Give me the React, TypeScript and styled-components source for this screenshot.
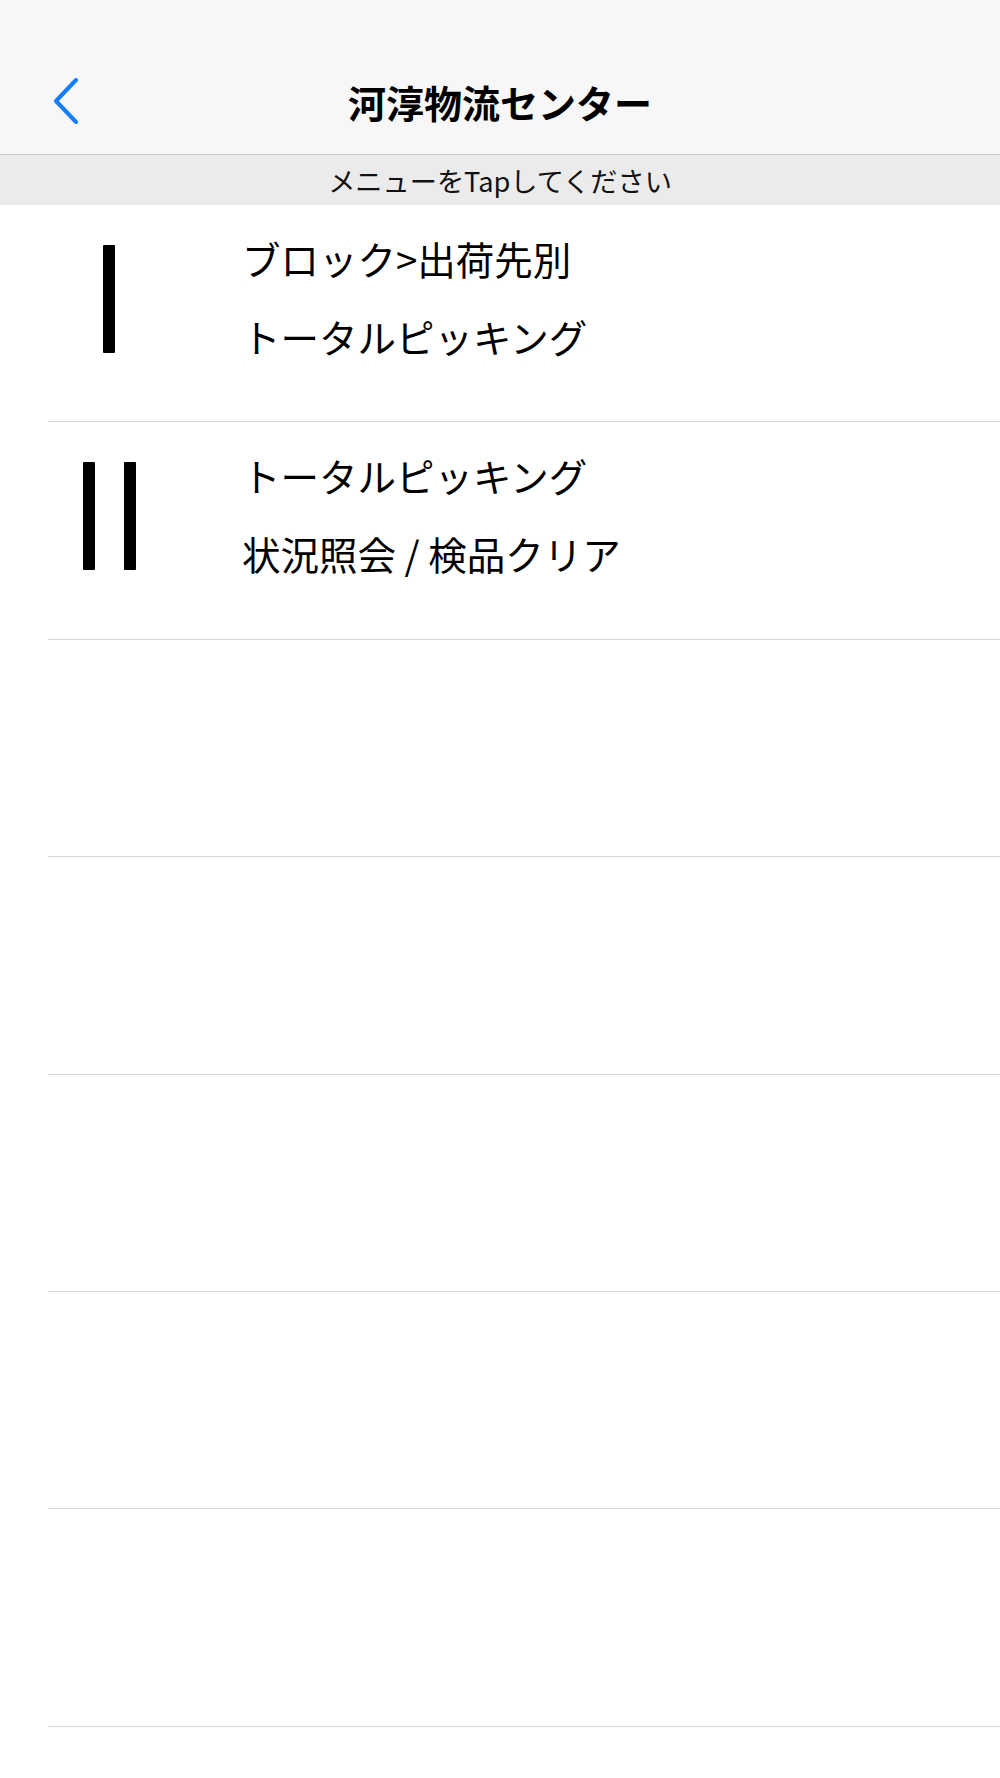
import * as React from "react";
import styled, { createGlobalStyle } from "styled-components";

const GlobalStyle = createGlobalStyle`
  html, body {
    margin: 0;
    padding: 0;
    background: #ffffff;
  }
  body {
    font-family: "Noto Sans CJK JP", "Noto Sans", sans-serif;
    color: #000;
  }
`;

const Page = styled.div`
  width: 1000px;
  min-height: 1778px;
  background: #fff;
  overflow: hidden;
`;

const NavBar = styled.header`
  box-sizing: border-box;
  height: 155px;
  padding-top: 48px;
  background: #f7f7f7;
  border-bottom: 1px solid #c6c6c6;
`;

const NavInner = styled.div`
  position: relative;
  height: 106px;
  display: flex;
  align-items: center;
  justify-content: center;
`;

const BackButton = styled.button`
  position: absolute;
  left: 53px;
  top: 50%;
  transform: translateY(-50%);
  width: 26px;
  height: 46px;
  padding: 0;
  border: 0;
  background: transparent;
  cursor: pointer;
  display: flex;
`;

const Title = styled.h1`
  margin: 0;
  font-size: 38px;
  font-weight: 700;
  letter-spacing: 0;
`;

const Prompt = styled.div`
  height: 50px;
  background: #ebebeb;
  display: flex;
  align-items: center;
  justify-content: center;
  font-size: 27.2px;
  color: #111;
`;

const Row = styled.div`
  box-sizing: border-box;
  display: flex;
  height: 217.4px;
  margin-left: 48px;
  border-bottom: 1px solid #d6d6d6;
  cursor: pointer;
`;

const IconCell = styled.div`
  width: 122px;
  display: flex;
  justify-content: center;
  align-items: flex-start;
  gap: 29px;
  padding-top: 40px;
`;

const Bar = styled.span`
  display: block;
  width: 12px;
  height: 108px;
  background: #000;
  border-radius: 1px;
`;

const Label = styled.div`
  margin-left: 72px;
  padding-top: 14px;
  font-size: 38.5px;
  line-height: 78px;
`;

const menu = [
  { bars: 1, lines: ["ブロック>出荷先別", "トータルピッキング"] },
  { bars: 2, lines: ["トータルピッキング", "状況照会 / 検品クリア"] },
  { bars: 0, lines: [] },
  { bars: 0, lines: [] },
  { bars: 0, lines: [] },
  { bars: 0, lines: [] },
  { bars: 0, lines: [] },
];

export default function App() {
  return (
    <Page>
      <GlobalStyle />
      <NavBar>
        <NavInner>
          <BackButton aria-label="戻る">
            <svg width="26" height="46" viewBox="0 0 26 46" fill="none">
              <polyline
                points="23,2 3,23 23,44"
                stroke="#147efb"
                strokeWidth="4"
                strokeLinecap="round"
                strokeLinejoin="round"
              />
            </svg>
          </BackButton>
          <Title>河淳物流センター</Title>
        </NavInner>
      </NavBar>
      <Prompt>メニューをTapしてください</Prompt>
      {menu.map((item, i) => (
        <Row key={i}>
          <IconCell>
            {Array.from({ length: item.bars }).map((_, j) => (
              <Bar key={j} />
            ))}
          </IconCell>
          <Label>
            {item.lines.map((l) => (
              <div key={l}>{l}</div>
            ))}
          </Label>
        </Row>
      ))}
    </Page>
  );
}
